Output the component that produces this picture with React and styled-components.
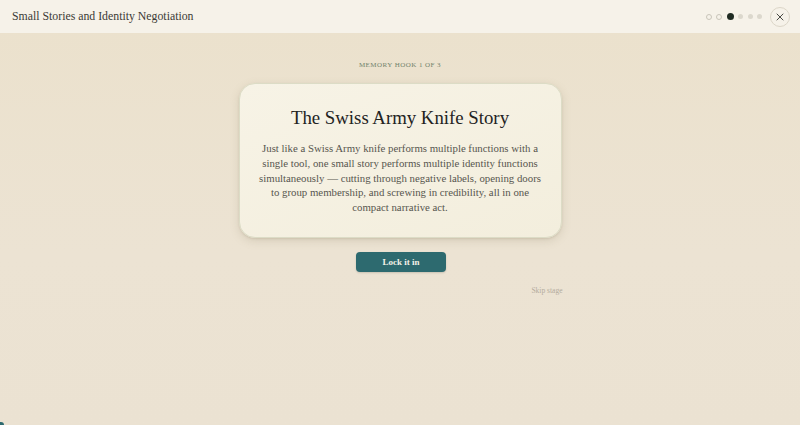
import React from 'react';
import styled, { createGlobalStyle } from 'styled-components';

const GlobalStyle = createGlobalStyle`
  html, body {
    margin: 0;
    padding: 0;
    height: 100%;
  }
  body {
    font-family: "Liberation Serif", "DejaVu Serif", serif;
    background: #ebe2d0;
  }
  #root {
    height: 100%;
  }
`;

const Page = styled.div`
  position: relative;
  height: 425px;
  overflow: hidden;
  display: flex;
  flex-direction: column;
  background: linear-gradient(180deg, #ebe1cc 0%, #ece3d3 60%, #ebe2d2 100%);
`;

const Header = styled.header`
  height: 33px;
  flex-shrink: 0;
  display: flex;
  align-items: center;
  justify-content: space-between;
  padding: 0 10px 0 12px;
  background: #f6f2e9;
  box-sizing: border-box;
`;

const Title = styled.h1`
  margin: 0;
  font-size: 11.8px;
  font-weight: 400;
  color: #3b3a35;
`;

const Controls = styled.div`
  display: flex;
  align-items: center;
  gap: 8px;
`;

const Dots = styled.div`
  display: flex;
  align-items: center;
  gap: 4.5px;
`;

const Dot = styled.span`
  display: block;
  box-sizing: border-box;
  border-radius: 50%;
  width: ${p => (p.$state === 'current' ? '7px' : p.$state === 'done' ? '6px' : '5px')};
  height: ${p => (p.$state === 'current' ? '7px' : p.$state === 'done' ? '6px' : '5px')};
  background: ${p => (p.$state === 'current' ? '#1f2b22' : p.$state === 'done' ? 'transparent' : '#dcd8cd')};
  border: ${p => (p.$state === 'done' ? '1px solid #c9c5ba' : 'none')};
`;

const CloseButton = styled.button`
  width: 20px;
  height: 20px;
  border-radius: 50%;
  border: 1px solid #dcd6c8;
  background: transparent;
  display: flex;
  align-items: center;
  justify-content: center;
  padding: 0;
  color: #4a4a44;
  cursor: pointer;
`;

const Main = styled.main`
  flex: 1;
  display: flex;
  flex-direction: column;
  align-items: center;
  padding-top: 28px;
`;

const Eyebrow = styled.div`
  font-size: 7px;
  letter-spacing: 0.45px;
  color: #72836c;
  text-transform: uppercase;
  margin-bottom: 14px;
`;

const Card = styled.section`
  width: 323px;
  box-sizing: border-box;
  padding: 23px 19px 22px;
  border-radius: 16px;
  background: linear-gradient(160deg, #f7f3e6 0%, #f3eedd 100%);
  border: 1px solid #dcdcc6;
  box-shadow: 0 3px 10px rgba(120, 110, 80, 0.18), 0 1px 2px rgba(120, 110, 80, 0.15);
  text-align: center;
`;

const CardTitle = styled.h2`
  margin: 0 0 12px;
  font-size: 18.8px;
  font-weight: 400;
  color: #23231f;
`;

const CardText = styled.p`
  margin: 0;
  font-size: 10.8px;
  line-height: 14.8px;
  color: #57564f;
`;

const Actions = styled.div`
  width: 323px;
  display: flex;
  flex-direction: column;
  align-items: center;
  margin-top: 14px;
`;

const LockButton = styled.button`
  width: 90px;
  height: 20px;
  margin-left: 2px;
  border-radius: 4px;
  border: none;
  background: #2d6a6f;
  color: #f4f1e8;
  font-family: inherit;
  font-size: 9px;
  font-weight: 700;
  cursor: pointer;
  box-shadow: 0 1px 2px rgba(0, 0, 0, 0.15);
`;

const SkipLink = styled.button`
  align-self: flex-end;
  margin-top: 14px;
  margin-right: -1px;
  border: none;
  background: none;
  padding: 0;
  font-family: inherit;
  font-size: 7.5px;
  color: #b3ab9d;
  cursor: pointer;
`;

const ProgressBar = styled.div`
  position: absolute;
  left: 0;
  bottom: 0;
  width: 4px;
  height: 3px;
  border-top-right-radius: 3px;
  background: #2d6a6f;
`;

const dots = ['done', 'done', 'current', 'todo', 'todo', 'todo'];

export default function App() {
  return (
    <>
      <GlobalStyle />
      <Page>
        <Header>
          <Title>Small Stories and Identity Negotiation</Title>
          <Controls>
            <Dots>
              {dots.map((s, i) => (
                <Dot key={i} $state={s} />
              ))}
            </Dots>
            <CloseButton aria-label="Close">
              <svg width="8" height="8" viewBox="0 0 8 8">
                <path d="M1 1 L7 7 M7 1 L1 7" stroke="currentColor" strokeWidth="1" strokeLinecap="round" />
              </svg>
            </CloseButton>
          </Controls>
        </Header>
        <Main>
          <Eyebrow>Memory hook 1 of 3</Eyebrow>
          <Card>
            <CardTitle>The Swiss Army Knife Story</CardTitle>
            <CardText>
              Just like a Swiss Army knife performs multiple functions with a single tool, one small
              story performs multiple identity functions simultaneously — cutting through negative
              labels, opening doors to group membership, and screwing in credibility, all in one
              compact narrative act.
            </CardText>
          </Card>
          <Actions>
            <LockButton>Lock it in</LockButton>
            <SkipLink>Skip stage</SkipLink>
          </Actions>
        </Main>
        <ProgressBar />
      </Page>
    </>
  );
}
